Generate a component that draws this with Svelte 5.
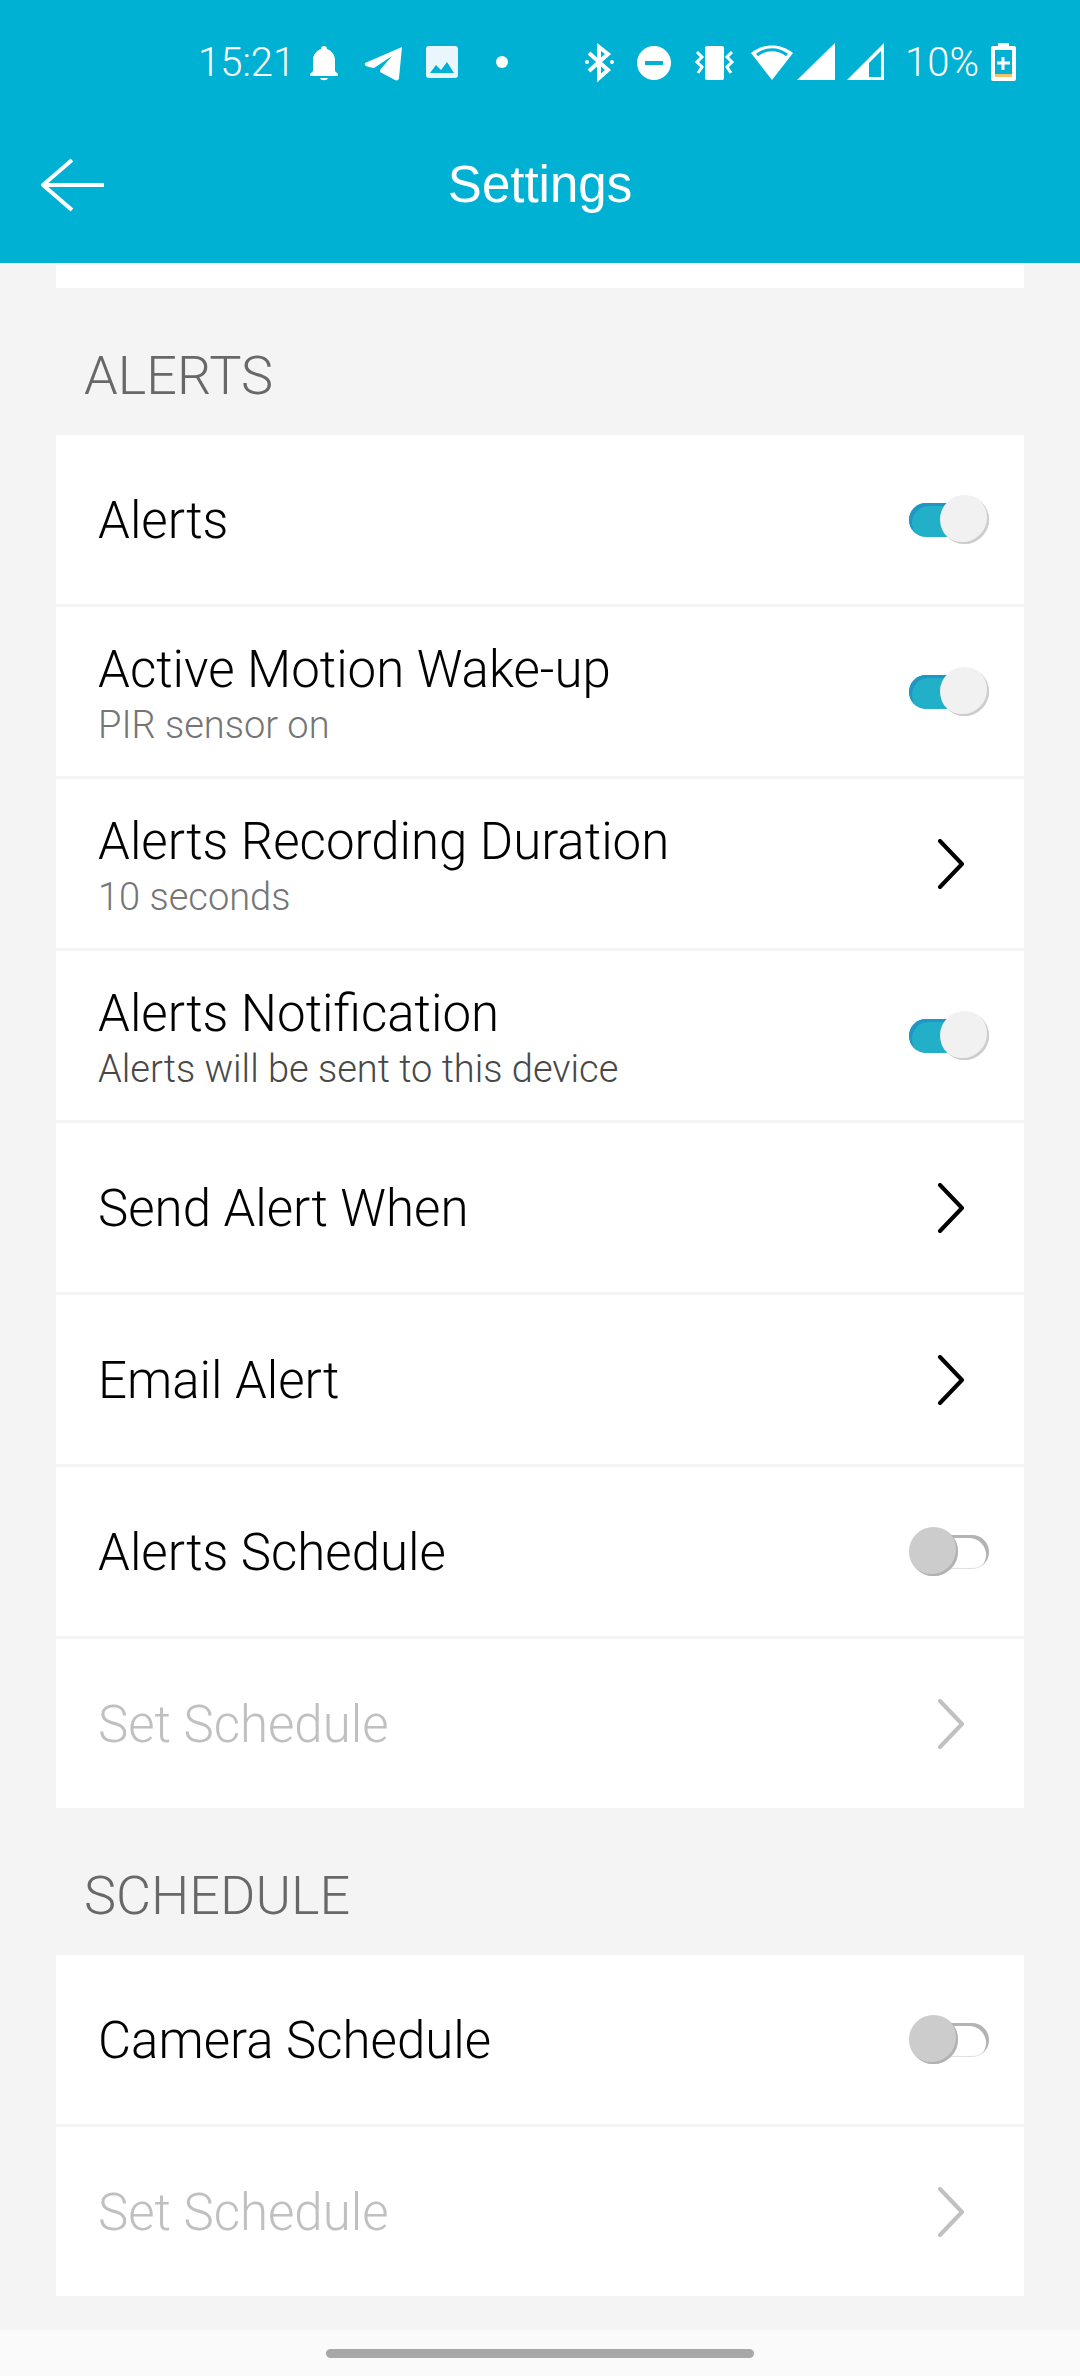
<script lang="ts">
	type Row = {
		id: string;
		title: string;
		note?: string;
		strong?: boolean;
		toggle?: boolean;
		on?: boolean;
		disabled?: boolean;
	};

	let sections: { name: string; rows: Row[] }[] = [
		{
			name: 'ALERTS',
			rows: [
				{ id: 'alerts', title: 'Alerts', toggle: true, on: true },
				{ id: 'motion', title: 'Active Motion Wake-up', note: 'PIR sensor on', toggle: true, on: true },
				{ id: 'duration', title: 'Alerts Recording Duration', note: '10 seconds' },
				{
					id: 'notification',
					title: 'Alerts Notification',
					note: 'Alerts will be sent to this device',
					strong: true,
					toggle: true,
					on: true
				},
				{ id: 'send-when', title: 'Send Alert When' },
				{ id: 'email', title: 'Email Alert' },
				{ id: 'alerts-schedule', title: 'Alerts Schedule', toggle: true, on: false },
				{ id: 'alerts-set', title: 'Set Schedule', disabled: true }
			]
		},
		{
			name: 'SCHEDULE',
			rows: [
				{ id: 'camera-schedule', title: 'Camera Schedule', toggle: true, on: false },
				{ id: 'camera-set', title: 'Set Schedule', disabled: true }
			]
		}
	];
</script>

<div class="screen">
	<header>
		<div class="status-bar">
			<div class="status-left">
				<span>15:21</span>
				<div class="notices">
					<!-- bell -->
					<svg width="39" height="40" viewBox="0 0 39 40" fill="#fff">
						<path d="M19 3c-2 0-3 1-3 3C11 8 8 12 8 17v11l-3 3v2h28v-2l-3-3V17c0-5-3-9-8-11 0-2-1-3-3-3zM15 35h8c-1 3-7 3-8 0z" />
					</svg>
					<!-- paper plane -->
					<svg width="39" height="40" viewBox="0 0 39 40" fill="#fff">
						<path d="M38 4 1 20c-1 2 1 4 9 5L28 13 16 27v2l15 8c2 1 4 0 4-2z" />
					</svg>
					<!-- picture -->
					<svg width="39" height="40" viewBox="0 0 39 40">
						<rect x="3" y="3" width="32" height="32" rx="3" fill="#e9f7fd" />
						<path d="M7 30l6-8 5 5 6-8 7 11z" fill="#00b1d4" />
					</svg>
					<svg width="39" height="40" viewBox="0 0 39 40" fill="#fff">
						<circle cx="20" cy="19" r="6" />
					</svg>
				</div>
			</div>
			<div class="status-right">
				<!-- bluetooth -->
				<svg width="52" height="40" viewBox="0 0 52 40" fill="none" stroke="#fff" stroke-width="4">
					<path d="M16 10l19 17-9 8V4l9 7-19 17" />
					<circle cx="14" cy="19" r="2" fill="#fff" stroke="none" />
					<circle cx="39" cy="19" r="2" fill="#fff" stroke="none" />
				</svg>
				<!-- do not disturb -->
				<svg width="50" height="40" viewBox="0 0 50 40">
					<circle cx="25" cy="20" r="17" fill="#fff" />
					<rect x="16" y="18" width="18" height="4" fill="#00b1d4" />
				</svg>
				<!-- vibrate -->
				<svg width="64" height="40" viewBox="0 0 64 40">
					<rect x="22" y="3" width="19" height="34" rx="2" fill="#fff" />
					<path
						d="M14 9l5 5-5 5 5 5-4 6M49 9l-5 5 5 5-5 5 4 6"
						fill="none"
						stroke="#fff"
						stroke-width="3"
					/>
				</svg>
				<!-- wifi -->
				<svg width="42" height="40" viewBox="0 0 42 40">
					<path d="M0 10c12-10 30-10 42 0L21 37z" fill="#fff" />
					<path d="M6 12c9-7 21-7 30 0" fill="none" stroke="#00b1d4" stroke-width="3" />
				</svg>
				<!-- mobile signal, two SIMs -->
				<svg width="42" height="40" viewBox="0 0 42 40" fill="#fff">
					<path d="M38 0v37H0z" />
				</svg>
				<svg width="46" height="40" viewBox="0 0 46 40">
					<path d="M41 0v37H4z" fill="#fff" />
					<path d="M38 8v26H26V20z" fill="#00b1d4" />
				</svg>
				<span class="level">10%</span>
				<!-- battery -->
				<svg width="25" height="40" viewBox="0 0 25 40">
					<path d="M7 0h11v3h5q2 0 2 2v31q0 2-2 2H2q-2 0-2-2V5q0-2 2-2h5z" fill="#fff" />
					<path d="M4 7h17v24H4z" fill="#00b1d4" />
					<path d="M4 31h17v3H4z" fill="#f2c46a" />
					<path d="M12 14v13M6 20h13" stroke="#fff" stroke-width="3" />
				</svg>
			</div>
		</div>
		<div class="title-bar">
			<button class="back" aria-label="Back">
				<svg width="66" height="56" viewBox="0 0 66 56" fill="none" stroke="#fff" stroke-width="4">
					<path d="M32 3 3 28l29 25M3 28h61" stroke-linejoin="round" />
				</svg>
			</button>
			<h1>Settings</h1>
		</div>
	</header>

	<main>
		<div class="card previous"></div>
		{#each sections as section}
			<h2>{section.name}</h2>
			<div class="card">
				{#each section.rows as row (row.id)}
					{#if row.toggle}
						<label class="row" for={row.id}>
							<span class="text">
								<span class="name">{row.title}</span>
								{#if row.note}
									<span class="note" class:strong={row.strong}>{row.note}</span>
								{/if}
							</span>
							<input type="checkbox" id={row.id} bind:checked={row.on} />
						</label>
					{:else}
						<button class="row" id={row.id} disabled={row.disabled}>
							<span class="text">
								<span class="name">{row.title}</span>
								{#if row.note}
									<span class="note">{row.note}</span>
								{/if}
							</span>
							<svg
								class="chevron"
								width="28"
								height="50"
								viewBox="0 0 28 50"
								fill="none"
								stroke="currentColor"
								stroke-width="4"
								stroke-linecap="round"
								stroke-linejoin="round"
							>
								<path d="M3 2l22 23L3 48" />
							</svg>
						</button>
					{/if}
				{/each}
			</div>
		{/each}
	</main>

	<footer>
		<div class="home-bar"></div>
	</footer>
</div>

<style>
	:global(body) {
		margin: 0;
		background: #f4f4f4;
	}
	.screen {
		display: flex;
		flex-direction: column;
		min-height: 100vh;
		font-family: Roboto, 'Liberation Sans', sans-serif;
		font-weight: 300;
		color: #000;
	}
	header {
		background: #00b1d4;
		color: #fff;
	}
	.status-bar {
		display: flex;
		justify-content: space-between;
		align-items: center;
		height: 126px;
		padding: 0 64px 0 198px;
		font-size: 40px;
		line-height: 40px;
	}
	.status-left,
	.status-right,
	.notices {
		display: flex;
		align-items: center;
	}
	.status-left {
		gap: 10px;
	}
	.notices {
		gap: 20px;
	}
	.status-right {
		gap: 4px;
	}
	.level {
		padding: 0 8px 0 12px;
	}
	.title-bar {
		display: grid;
		grid-template-columns: 1fr auto 1fr;
		align-items: center;
		height: 137px;
		padding: 0 40px 20px;
		box-sizing: border-box;
	}
	.back {
		display: flex;
		justify-self: start;
		padding: 0;
		border: none;
		background: none;
	}
	h1 {
		margin: 0;
		font-family: 'Liberation Sans', Arial, sans-serif;
		font-size: 51px;
		line-height: 64px;
		font-weight: 400;
	}
	main {
		flex: 1;
		padding: 0 56px 34px;
	}
	h2 {
		margin: 0;
		padding: 56px 28px 27px;
		font-size: 54px;
		line-height: 64px;
		font-weight: 300;
		color: #686868;
	}
	.card {
		display: flex;
		flex-direction: column;
		gap: 3px;
	}
	.previous {
		height: 25px;
		background: #fff;
	}
	.row {
		display: flex;
		justify-content: space-between;
		align-items: center;
		min-height: 169px;
		padding: 0 35px 0 42px;
		box-sizing: border-box;
		border: none;
		background: #fff;
		font: inherit;
		color: inherit;
		text-align: left;
	}
	.row:disabled {
		color: #c0c0c0;
	}
	.text {
		display: flex;
		flex-direction: column;
		padding-top: 2px;
	}
	.name {
		font-size: 51px;
		line-height: 64px;
	}
	.note {
		font-size: 38px;
		line-height: 46px;
		color: #757575;
	}
	.note.strong {
		color: #484848;
	}
	.chevron {
		margin-right: 24px;
	}

	/* toggle switch */
	input {
		appearance: none;
		display: grid;
		align-items: center;
		width: 80px;
		height: 50px;
		margin: 0;
	}
	input::before,
	input::after {
		content: '';
		grid-area: 1 / 1;
		box-sizing: border-box;
	}
	input::before {
		height: 34px;
		border-radius: 17px;
		background: #fff;
		box-shadow:
			inset -3px 3px 0 #b4b4b4,
			inset 0 -1px 0 #e0e0e0;
	}
	input::after {
		width: 49px;
		height: 49px;
		border-radius: 50%;
		background: #ccc;
		box-shadow: inset -2px -2px 0 #b2b2b2;
	}
	input:checked::before {
		background: #22b0c9;
		box-shadow: inset 3px 3px 0 #2196c3;
	}
	input:checked::after {
		justify-self: end;
		background: #f1f1f1;
		box-shadow: inset -2px -2px 0 #cdcdcd;
	}

	footer {
		display: flex;
		justify-content: center;
		height: 46px;
		background: #fafafa;
	}
	.home-bar {
		width: 428px;
		height: 9px;
		margin-top: 19px;
		border-radius: 5px;
		background: #a8a8a8;
	}
</style>
